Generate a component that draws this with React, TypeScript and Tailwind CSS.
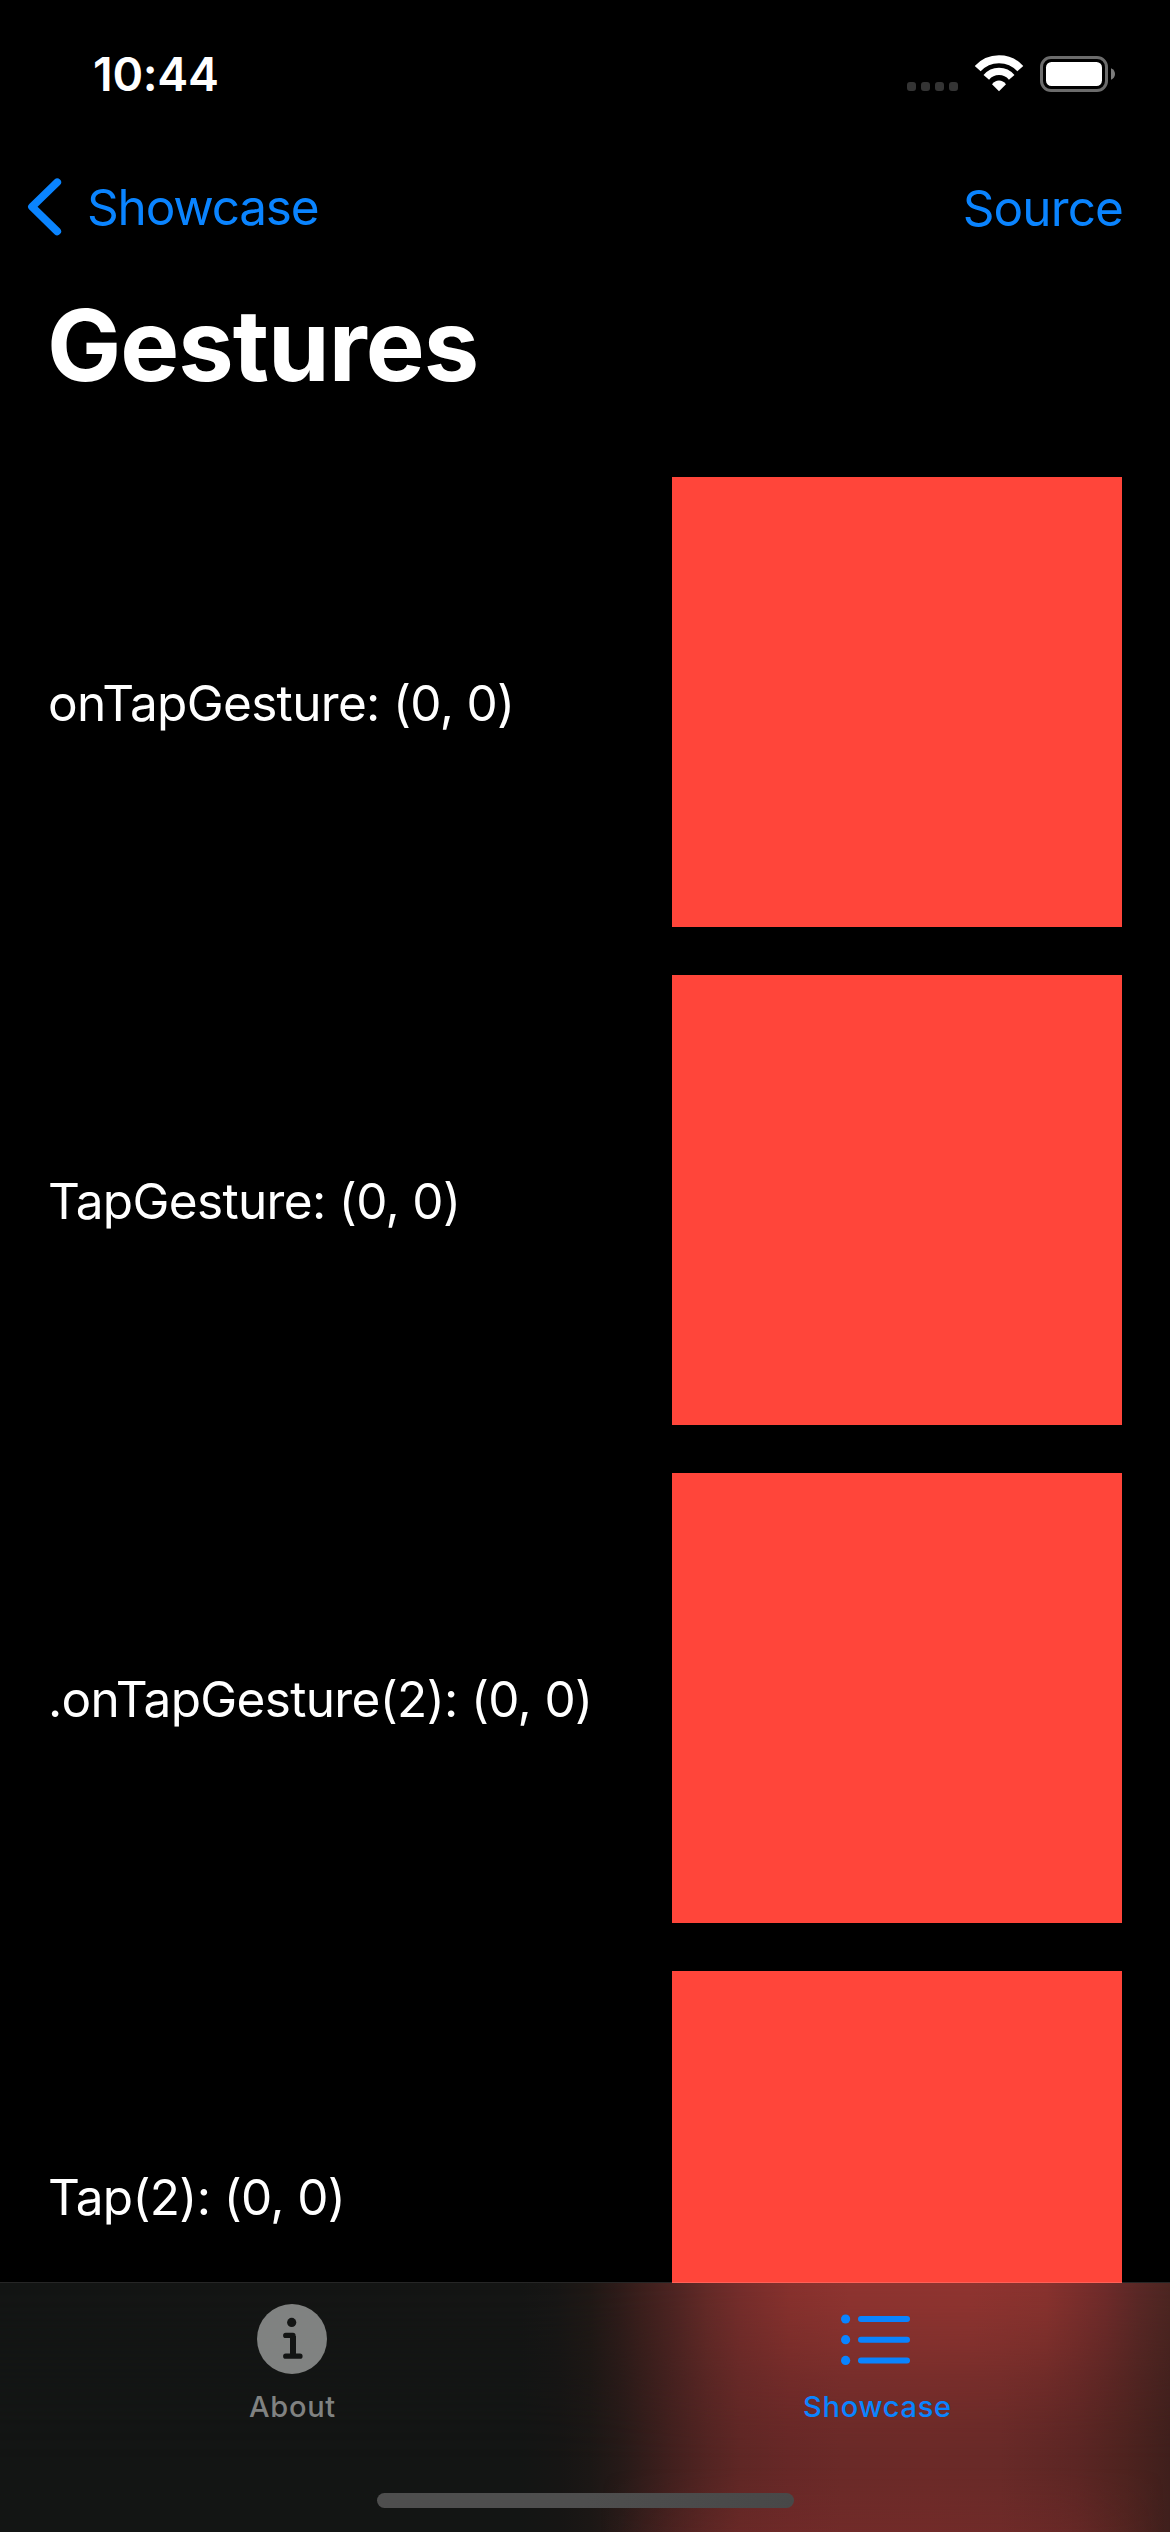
import React from 'react';

const rows = [
  'onTapGesture: (0, 0)',
  'TapGesture: (0, 0)',
  '.onTapGesture(2): (0, 0)',
  'Tap(2): (0, 0)',
];

function CellularDots() {
  return (
    <div className="mb-px flex gap-[5px]">
      {[0, 1, 2, 3].map((i) => (
        <span key={i} className="size-[9px] rounded-[3px] bg-[#343434]" />
      ))}
    </div>
  );
}

function WifiIcon() {
  return (
    <svg width="50" height="37" viewBox="0 0 50 37" fill="none" stroke="#fff" className="block">
      <path d="M3.7 13.6A28.8 28.8 0 0 1 46.3 13.6" strokeWidth="8" />
      <path d="M12.3 22.4A16.5 16.5 0 0 1 37.7 22.4" strokeWidth="7.2" />
      <path d="M18 29.2Q21 25.6 25 25.6T32 29.2L25 36.2Z" fill="#fff" stroke="none" />
    </svg>
  );
}

function BatteryIcon() {
  return (
    <svg width="75" height="36" viewBox="0 0 75 36" className="block">
      <rect x="1.5" y="1.5" width="65" height="33" rx="9.5" fill="none" stroke="#6c6c6c" strokeWidth="3" />
      <rect x="6" y="6" width="56" height="24" rx="5.5" fill="#fff" />
      <path d="M71 12.2C73.6 13.2 75 15.4 75 18S73.6 22.8 71 23.8Z" fill="#7c7c7c" />
    </svg>
  );
}

function StatusBar() {
  return (
    <div className="flex h-[141px] items-start justify-between pl-[93px] pr-[55px]">
      <span className="mt-[49px] text-[46.5px] leading-[50px] font-semibold tracking-[-0.28px] text-white">10:44</span>
      <div className="mt-[55px] flex h-[37px] items-end">
        <CellularDots />
        <div className="ml-[16px]">
          <WifiIcon />
        </div>
        <div className="ml-[16px]">
          <BatteryIcon />
        </div>
      </div>
    </div>
  );
}

function NavBar() {
  return (
    <div className="flex h-[132px] items-center justify-between pl-[26px] pr-[47px] text-[49.5px] leading-[60px] text-[#0a84ff]">
      <button className="flex items-center">
        <svg width="38" height="60" viewBox="0 0 38 60" fill="none" className="block">
          <path
            d="M31.2 5.3L6 29.8L31.2 54.4"
            stroke="#0a84ff"
            strokeWidth="7.8"
            strokeLinecap="round"
            strokeLinejoin="round"
          />
        </svg>
        <span className="ml-[23px] tracking-[-1.2px]">Showcase</span>
      </button>
      <button className="pt-[2px] tracking-[-0.9px]">Source</button>
    </div>
  );
}

function InfoIcon() {
  return (
    <svg width="73" height="72" viewBox="0 0 73 72" className="block">
      <circle cx="36" cy="36" r="35" fill="#808281" />
      <circle cx="35.7" cy="19.4" r="4.6" fill="#131514" />
      <path
        d="M29.7 32.4H37V53M29.7 53.2H44"
        fill="none"
        stroke="#131514"
        strokeWidth="5.2"
        strokeLinecap="round"
        strokeLinejoin="round"
      />
      <path d="M37 33V52" stroke="#131514" strokeWidth="6" />
    </svg>
  );
}

function ListIcon() {
  return (
    <svg width="73" height="72" viewBox="0 0 73 72" className="block" fill="#0a84ff">
      {[16, 36.7, 57.4].map((y) => (
        <g key={y}>
          <circle cx="4.6" cy={y} r="4.6" />
          <rect x="17" y={y - 3} width="52" height="6" rx="3" />
        </g>
      ))}
    </svg>
  );
}

function TabBar() {
  return (
    <div className="absolute inset-x-0 bottom-0 h-[250px]">
      <div className="h-px bg-white/15" />
      <div className="relative h-[249px] overflow-hidden bg-[#131514]">
        <div className="absolute inset-0 bg-[linear-gradient(90deg,#131514_0px,#131514_520px,#161514_560px,#1b1715_590px,#271a18_623px,#391e1c_657px,#42201e_673px,#522422_707px,#5f2725_740px,#672827_790px,#6a2a28_840px,#6b2a28_930px,#682a28_1000px,#5c2624_1075px,#4e231f_1125px,#3f1f1c_1170px)]" />
        <div className="absolute inset-0 bg-[linear-gradient(90deg,#131514_0px,#141514_520px,#171615_555px,#1f1815_590px,#2d1b19_617px,#3b1f1c_640px,#4d2422_673px,#642a27_707px,#752d2b_740px,#87312d_790px,#8e3430_850px,#8f3430_970px,#88322e_1046px,#6f2b2a_1105px,#5a2826_1138px,#4c2521_1170px)] [mask-image:linear-gradient(180deg,#000_0px,rgba(0,0,0,0.9)_25px,rgba(0,0,0,0.66)_60px,rgba(0,0,0,0.34)_100px,rgba(0,0,0,0.1)_140px,transparent_175px)]" />
        <div className="absolute inset-0 bg-[linear-gradient(90deg,transparent_600px,rgba(130,46,44,0.28)_740px,rgba(130,46,44,0.28)_1060px,transparent_1165px)] [mask-image:linear-gradient(180deg,transparent_185px,#000_249px)]" />
        <div className="relative flex pt-[20px] text-[29px] leading-[36px] font-medium">
          <button className="flex flex-1 flex-col items-center text-[#808281]">
            <InfoIcon />
            <span className="mt-[14px] tracking-[0.7px]">About</span>
          </button>
          <button className="flex flex-1 flex-col items-center text-[#0a84ff]">
            <ListIcon />
            <span className="mt-[14px] tracking-[0.73px]">Showcase</span>
          </button>
        </div>
        <div className="absolute bottom-[24px] left-[377px] h-[15px] w-[417px] rounded-full bg-linear-to-r from-[#4e4e4e] from-50% to-[#484848]" />
      </div>
    </div>
  );
}

export default function App() {
  return (
    <div className="relative h-[2532px] w-[1170px] overflow-hidden bg-black font-['Inter',sans-serif]">
      <StatusBar />
      <NavBar />
      <h1 className="pl-[47px] text-[99px] leading-[144px] font-bold tracking-[-0.97px] text-white">Gestures</h1>
      <div className="flex flex-col gap-[48px] pt-[60px] pr-[48px] pl-[48px]">
        {rows.map((label) => (
          <div key={label} className="flex h-[450px] items-center justify-between">
            <span className="pt-[2px] text-[49.5px] leading-[60px] tracking-[-0.66px] whitespace-nowrap text-white">
              {label}
            </span>
            <div className="size-[450px] bg-[#ff453a]" />
          </div>
        ))}
      </div>
      <TabBar />
    </div>
  );
}
